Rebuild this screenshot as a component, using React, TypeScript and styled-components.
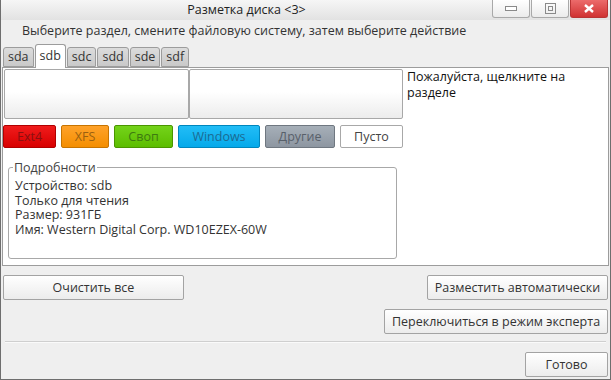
import React from "react";
import styled, { createGlobalStyle } from "styled-components";

const GlobalStyle = createGlobalStyle`
  body {
    margin: 0;
    font-family: "Open Sans", "DejaVu Sans", sans-serif;
    font-size: 12.5px;
    color: #333;
  }
`;

const WindowDiv = styled.div`
  width: 611px;
  height: 380px;
  box-sizing: border-box;
  display: flex;
  flex-direction: column;
  background: #efefef;
  border: 1px solid #6e6e6e;
  border-top: none;
  overflow: hidden;
`;

const TitleBar = styled.div`
  height: 20px;
  display: flex;
  align-items: flex-start;
  background: linear-gradient(#f6f6f6, #e2e2e2);
`;

const TitleText = styled.div`
  flex: 1;
  text-align: center;
  line-height: 20px;
  color: #222;
`;

const Controls = styled.div`
  display: flex;
  gap: 1px;
  padding-right: 2px;
`;

const ControlButton = styled.div<{ $close?: boolean }>`
  width: 38px;
  height: 18px;
  box-sizing: border-box;
  display: flex;
  align-items: center;
  justify-content: center;
  border: 1px solid ${(p) => (p.$close ? "#b93434" : "#a9a9a9")};
  border-top: none;
  border-radius: 0 0 3px 3px;
  background: ${(p) =>
    p.$close
      ? "linear-gradient(#ec6b6b, #d03232)"
      : "linear-gradient(#ffffff, #ebebeb)"};
`;

const Hint = styled.div`
  padding: 3px 0 0 21px;
  height: 18px;
  line-height: 16px;
  color: #333;
`;

const TabRow = styled.div`
  display: flex;
  align-items: flex-end;
  gap: 1px;
  padding: 3px 0 0 2px;
  height: 23px;
  position: relative;
  z-index: 1;
`;

const Tab = styled.div<{ $active?: boolean }>`
  box-sizing: border-box;
  height: ${(p) => (p.$active ? "24px" : "20px")};
  margin-bottom: ${(p) => (p.$active ? "-1px" : "0")};
  padding: 0 4px;
  border: 1px solid #9c9c9c;
  border-bottom: ${(p) => (p.$active ? "none" : "1px solid #9c9c9c")};
  border-radius: 3px 3px 0 0;
  background: ${(p) =>
    p.$active ? "#ffffff" : "linear-gradient(#dcdcdc, #c9c9c9)"};
  line-height: ${(p) => (p.$active ? "21px" : "18px")};
  color: #333;
`;

const Pane = styled.div`
  margin: 0 1px;
  height: 199px;
  box-sizing: border-box;
  border: 1px solid #9c9c9c;
  background: #ffffff;
  display: flex;
  flex-direction: column;
`;

const TopRow = styled.div`
  display: flex;
  padding: 1px 1px 0 1px;
`;

const Partition = styled.div<{ $w: number }>`
  width: ${(p) => p.$w}px;
  height: 50px;
  box-sizing: border-box;
  border: 1px solid #a8a8a8;
  border-radius: 2px;
  background: linear-gradient(#ffffff 45%, #ececec);
`;

const InfoText = styled.div`
  flex: 1;
  padding: 0 0 0 4px;
  line-height: 16px;
  color: #111;
`;

const LegendRow = styled.div`
  display: flex;
  gap: 5px;
  margin-top: 6px;
`;

const LegendButton = styled.div<{ $bg: string; $border: string; $w: number; $fg: string }>`
  width: ${(p) => p.$w}px;
  height: 23px;
  box-sizing: border-box;
  border: 1px solid ${(p) => p.$border};
  border-radius: 2px;
  background: ${(p) => p.$bg};
  color: ${(p) => p.$fg};
  text-align: center;
  line-height: 21px;
`;

const GroupBox = styled.fieldset`
  margin: 11px 0 0 5px;
  width: 389px;
  height: 100px;
  box-sizing: border-box;
  border: 1px solid #a8a8a8;
  border-radius: 3px;
  padding: 3px 6px 0 6px;
`;

const GroupTitle = styled.legend`
  padding: 0 1px;
  margin-left: -2px;
  color: #444;
`;

const DetailLine = styled.div`
  line-height: 14.5px;
  color: #333;
`;

const Bottom = styled.div`
  display: flex;
  flex-direction: column;
  padding: 9px 2px 0 2px;
  gap: 9px;
`;

const ButtonRow = styled.div<{ $end?: boolean }>`
  display: flex;
  justify-content: ${(p) => (p.$end ? "flex-end" : "space-between")};
`;

const PushButton = styled.div<{ $w: number }>`
  width: ${(p) => p.$w}px;
  height: 25px;
  box-sizing: border-box;
  border: 1px solid #a3a3a3;
  border-radius: 2px;
  background: linear-gradient(#ffffff, #ececec);
  text-align: center;
  line-height: 23px;
  color: #333;
`;

const Separator = styled.div`
  height: 1px;
  margin: -2px 2px 0 2px;
  background: #cfcfcf;
  border-bottom: 1px solid #fafafa;
`;

const legend = [
  { label: "Ext4", bg: "linear-gradient(#f01c1c, #d80000)", border: "#b00000", fg: "#8a1010", w: 53 },
  { label: "XFS", bg: "linear-gradient(#ffa22a, #f48e00)", border: "#c77400", fg: "#9a6010", w: 48 },
  { label: "Своп", bg: "linear-gradient(#74d31a, #5cbd00)", border: "#4a9600", fg: "#3d7a10", w: 59 },
  { label: "Windows", bg: "linear-gradient(#22bdf6, #05a9ea)", border: "#0086bd", fg: "#1c6a92", w: 82 },
  { label: "Другие", bg: "linear-gradient(#a6afb8, #8d96a1)", border: "#6f7780", fg: "#58606a", w: 70 },
  { label: "Пусто", bg: "#ffffff", border: "#a8a8a8", fg: "#444", w: 63 },
];

export default function App() {
  return (
    <>
      <GlobalStyle />
      <WindowDiv>
        <TitleBar>
          <TitleText>Разметка диска &lt;3&gt;</TitleText>
          <Controls>
            <ControlButton>
              <svg width="12" height="6" viewBox="0 0 12 6">
                <rect x="0.5" y="0.5" width="11" height="4" fill="#fff" stroke="#8a8a8a" />
              </svg>
            </ControlButton>
            <ControlButton>
              <svg width="11" height="11" viewBox="0 0 11 11">
                <rect x="0.5" y="0.5" width="10" height="10" fill="none" stroke="#8a8a8a" />
                <rect x="3.5" y="3.5" width="4" height="4" fill="none" stroke="#8a8a8a" />
              </svg>
            </ControlButton>
            <ControlButton $close>
              <svg width="10" height="9" viewBox="0 0 10 9">
                <path d="M1 1 L9 8 M9 1 L1 8" stroke="#fff" strokeWidth="2.4" />
              </svg>
            </ControlButton>
          </Controls>
        </TitleBar>
        <Hint>Выберите раздел, смените файловую систему, затем выберите действие</Hint>
        <TabRow>
          {["sda", "sdb", "sdc", "sdd", "sde", "sdf"].map((t) => (
            <Tab key={t} $active={t === "sdb"}>
              {t}
            </Tab>
          ))}
        </TabRow>
        <Pane>
          <TopRow>
            <Partition $w={185} />
            <Partition $w={214} />
            <InfoText>
              Пожалуйста, щелкните на
              <br />
              разделе
            </InfoText>
          </TopRow>
          <LegendRow>
            {legend.map((l) => (
              <LegendButton key={l.label} $bg={l.bg} $border={l.border} $fg={l.fg} $w={l.w}>
                {l.label}
              </LegendButton>
            ))}
          </LegendRow>
          <GroupBox>
            <GroupTitle>Подробности</GroupTitle>
            <DetailLine>Устройство: sdb</DetailLine>
            <DetailLine>Только для чтения</DetailLine>
            <DetailLine>Размер: 931ГБ</DetailLine>
            <DetailLine>Имя: Western Digital Corp. WD10EZEX-60W</DetailLine>
          </GroupBox>
        </Pane>
        <Bottom>
          <ButtonRow>
            <PushButton $w={181}>Очистить все</PushButton>
            <PushButton $w={181}>Разместить автоматически</PushButton>
          </ButtonRow>
          <ButtonRow $end>
            <PushButton $w={224}>Переключиться в режим эксперта</PushButton>
          </ButtonRow>
          <Separator />
          <ButtonRow $end>
            <PushButton $w={83}>Готово</PushButton>
          </ButtonRow>
        </Bottom>
      </WindowDiv>
    </>
  );
}
